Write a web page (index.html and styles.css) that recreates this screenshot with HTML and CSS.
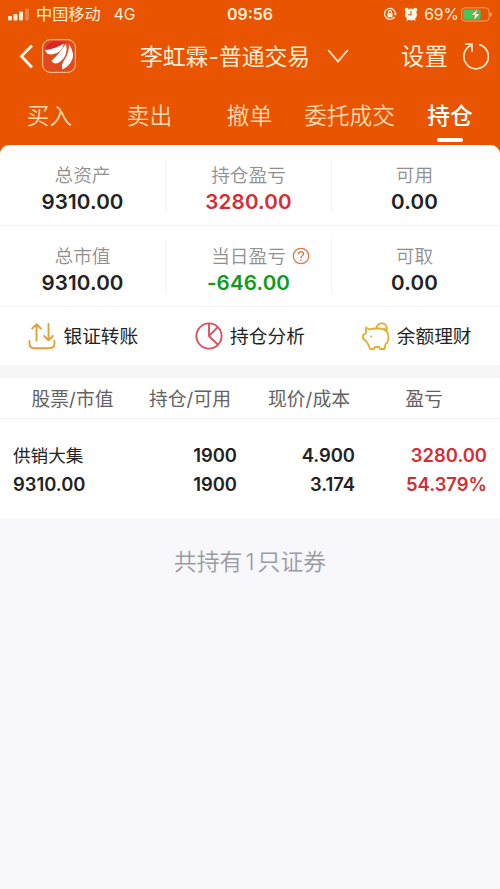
FILE: index.html
```html
<!DOCTYPE html>
<html lang="zh-CN">
<head>
<meta charset="utf-8">
<title>持仓</title>
<link rel="stylesheet" href="styles.css">
</head>
<body>
<header class="top">
  <div class="status">
    <div class="status-left">
      <svg class="signal" width="22" height="13" viewBox="0 0 22 13" fill="#fff0dc"><rect x="0" y="8" width="4" height="4.500" rx="1"/><rect x="5.500" y="6" width="4" height="6.500" rx="1"/><rect x="11" y="3.500" width="4" height="9" rx="1"/><rect x="17" y="0.500" width="4" height="12" rx="1" opacity=".3"/></svg>
      <span class="carrier">中国移动</span><span class="network">4G</span>
    </div>
    <time class="clock">09:56</time>
    <div class="status-right">
      <svg width="14" height="14" viewBox="0 0 14 14" fill="none" stroke="#fff0dc" stroke-width="1.300"><path d="M11.700 9.800A5.500 5.500 0 1 1 12.500 7"/><path d="M10.700 6.500h3.300l-1.600 2.300z" fill="#fff0dc" stroke="none"/><rect x="4.400" y="6.300" width="5.200" height="4" fill="#fff0dc" stroke="none"/><path d="M5.500 6.500V5.200a1.500 1.500 0 0 1 3 0v1.300"/></svg>
      <svg class="alarm" width="14" height="15" viewBox="0 0 14 15"><g fill="#fff5e8"><circle cx="7" cy="7.500" r="5.900"/><circle cx="2.700" cy="2.700" r="2"/><circle cx="11.300" cy="2.700" r="2"/><path d="M2 14l1.600-3 2 1.500zM12 14l-1.600-3-2 1.500z"/></g><path d="M7 4v3.700H4.200" fill="none" stroke="#e85400" stroke-width="1.100"/></svg>
      <span class="percent">69%</span>
      <svg class="battery" width="31" height="15" viewBox="0 0 31 15"><rect x=".6" y=".8" width="27.500" height="13.200" rx="3.500" fill="none" stroke="#f5a477" stroke-width="1"/><rect x="2.200" y="2.400" width="17.500" height="10" rx="2" fill="#43c75b"/><path d="M29.300 5v5q1.500-.8 1.500-2.500T29.300 5" fill="#f5a477"/><path d="M16.500 2L10.500 8h3.600l-1.500 5.300L18.700 7h-3.600z" fill="#fff" stroke="#e85400" stroke-width=".4"/></svg>
    </div>
  </div>
  <div class="nav">
    <div class="nav-left">
      <svg width="15" height="25" viewBox="0 0 15 25" fill="none" stroke="#fff5e8" stroke-width="2.800"><path d="M13 1.500L2.500 12.300 13 23.500"/></svg>
      <svg class="logo" width="34" height="34" viewBox="0 0 34 34"><rect x=".7" y=".7" width="32.600" height="32.600" rx="7.500" fill="#e04a1d" stroke="#ffd0a2" stroke-width="1"/><path d="M3 12Q4 3 13 2.500h12Q20 8 3 12z" fill="#dc2626"/><g fill="#fff"><path d="M3 11Q11 11 22 4.500 20 14 10 15.500 5 16 3 11z"/><path d="M9.500 22Q17 15 24 4.500 26.500 16 19 22 13 27 9.500 22z"/><path d="M20.500 30.500Q18.500 26 23 20 27 14 27 5 34 16 29 23 26 28 20.500 30.500z"/></g></svg>
    </div>
    <h1 class="title">李虹霖-普通交易</h1>
    <svg class="chevron" width="22" height="16" viewBox="0 0 22 16" fill="none" stroke="#ffe2bd" stroke-width="1.900"><path d="M1.200 2L11 13.500 20.800 2"/></svg>
    <span class="settings">设置</span>
    <svg class="refresh" width="27" height="28" viewBox="0 0 27 28" fill="none" stroke="#ffe9cc" stroke-width="1.700"><path d="M17.200 2.600A12.300 12.300 0 1 1 9.300 3.200"/><path d="M3 2.200h7v7.500"/></svg>
  </div>
  <nav class="tabs">
    <span>买入</span><span>卖出</span><span>撤单</span><span>委托成交</span><span class="active">持仓</span>
  </nav>
</header>
<main>
  <section class="summary">
    <div class="metrics">
      <div class="metric"><span class="label">总资产</span><b>9310.00</b></div>
      <div class="metric"><span class="label">持仓盈亏</span><b class="red">3280.00</b></div>
      <div class="metric"><span class="label">可用</span><b>0.00</b></div>
    </div>
    <div class="metrics">
      <div class="metric"><span class="label">总市值</span><b>9310.00</b></div>
      <div class="metric"><span class="label">当日盈亏<svg class="help" width="18" height="18" viewBox="0 0 18 18" fill="none" stroke="#d9794a" stroke-width="1.300"><circle cx="9" cy="9" r="7.700"/><path d="M6.500 7.200Q6.500 4.700 9 4.700t2.500 2.200Q11.500 8 10.200 8.800 9 9.500 9 10.900" stroke-width="1.300"/><circle cx="9" cy="13.100" r=".3"/></svg></span><b class="green">-646.00</b></div>
      <div class="metric"><span class="label">可取</span><b>0.00</b></div>
    </div>
    <div class="actions">
      <div class="action"><svg width="28" height="28" viewBox="0 0 28 28" fill="none" stroke="#dfa03c" stroke-width="1.900" stroke-linecap="round" stroke-linejoin="round"><path d="M8.500 18.500V2.300M4.200 6.500L8.500 2.200l4.300 4.300M20.500 2v15.800M16.200 14l4.300 4.300 4.300-4.300M1.500 19v2.500q0 4.700 5 4.700h15q5 0 5-4.700V19"/></svg><span>银证转账</span></div>
      <div class="action"><svg width="28" height="28" viewBox="0 0 28 28" fill="none" stroke="#dd5360" stroke-width="1.900" stroke-linejoin="round"><circle cx="14" cy="14" r="12.600"/><path d="M14 1.400V14l9 8.800M14 14l8.700-8.800"/></svg><span>持仓分析</span></div>
      <div class="action"><svg width="28" height="28" viewBox="0 0 28 28" fill="none" stroke="#e2ae2e" stroke-width="1.800" stroke-linejoin="round"><path d="M4 5.500l3.500 2Q10 6.500 14 6.500h4Q26.500 7.500 26.500 15q0 5-3 7.300L22.500 27H18l-1-2h-4l-1 2H8l-1.500-4Q5 20 3.800 19L1 16.300v-3L4 11z"/><path d="M14.500 6.500A5.200 5.200 0 1 1 24.500 8.500q-1-1.500-3-1.500"/><circle cx="9" cy="14.500" r="1" fill="#e2ae2e" stroke="none"/></svg><span>余额理财</span></div>
    </div>
  </section>
  <section class="holdings">
    <div class="columns"><span>股票/市值</span><span>持仓/可用</span><span>现价/成本</span><span>盈亏</span></div>
    <div class="holding">
      <div class="cell name"><span class="stock">供销大集</span><span>9310.00</span></div>
      <div class="cell"><span>1900</span><span>1900</span></div>
      <div class="cell"><span>4.900</span><span>3.174</span></div>
      <div class="cell red"><span>3280.00</span><span>54.379%</span></div>
    </div>
  </section>
  <p class="total">共持有<span class="count">1</span>只证券</p>
</main>
</body>
</html>
```

FILE: styles.css
```css
* { box-sizing: border-box; }
body { margin: 0; width: 500px; min-height: 889px; background: #f7f7fc; font-family: Inter, "Noto Sans CJK SC", sans-serif; color: #222; }
svg { display: block; flex: none; }
.top { height: 157px; background: #e85400; color: #ffedd8; }
.status { height: 28px; display: grid; grid-template-columns: 1fr auto 1fr; align-items: center; padding: 0 8px 0 8px; }
.status-left, .status-right { display: flex; align-items: center; }
.status-right { justify-content: flex-end; }
.carrier { margin-left: 6px; font-size: 16.2px; line-height: 28px; }
.network { margin-left: 13px; font-size: 15.6px; }
.clock { font-size: 16px; font-weight: 600; }
.alarm { margin-left: 7px; }
.percent { margin-left: 6px; font-size: 15.7px; }
.battery { margin-left: 2px; }
.nav { height: 56px; display: flex; align-items: center; padding: 0 11px 0 19px; }
.nav-left { display: flex; align-items: center; gap: 8px; width: 121px; }
.title { margin: 0; width: 170px; font-size: 22.8px; font-weight: 400; line-height: 56px; padding-top: 1px; white-space: nowrap; }
.chevron { margin-left: 17px; }
.settings { margin-left: 52px; width: 47px; font-size: 23.4px; line-height: 56px; padding-top: 2px; }
.refresh { margin-left: auto; }
.tabs { height: 61px; display: grid; grid-template-columns: repeat(5, 1fr); text-align: center; font-size: 22.7px; font-weight: 350; line-height: 64px; color: #ffd9b0; white-space: nowrap; }
.tabs span { display: flex; flex-direction: column; align-items: center; margin-left: -1px; }
.tabs .active { color: #fff; font-weight: 500; margin-left: 0; }
.active::after { content: ""; width: 26px; height: 4px; border-radius: 2px; background: #fff; margin-top: -10px; }
.summary { position: relative; margin-top: -12px; background: #fff; border-radius: 9px 9px 0 0; height: 220px; }
.metrics { height: 81px; display: grid; grid-template-columns: 165px 166px 1fr; align-items: center; border-bottom: 1px solid #f3f3f3; }
.metric { height: 54px; display: flex; flex-direction: column; align-items: center; border-left: 1px solid #f3f3f3; padding-top: 4px; }
.metric:first-child { border-left: 0; }
.metric:last-child { padding-right: 3px; }
.label { position: relative; font-size: 18.7px; font-weight: 350; line-height: 27px; color: #909090; }
.help { position: absolute; left: 100%; top: 4px; margin-left: 6px; }
.metric b { font-size: 20.6px; font-weight: 600; line-height: 26px; letter-spacing: .15px; }
.red, .metric b.red { color: #d92b32; }
.metric b.green { color: #109c18; }
.actions { height: 58px; display: grid; grid-template-columns: repeat(3, 1fr); }
.action { display: flex; align-items: center; justify-content: center; gap: 7px; font-size: 18.7px; line-height: 56px; }
.action span { padding-top: 2px; }
.holdings { border-top: 13px solid #f6f6f6; border-bottom: 6px solid #f7f7f8; background: #fff; height: 159px; }
.columns { height: 41px; display: grid; grid-template-columns: 145px 90px 148px 82px; border-bottom: 1px solid #f1f1f1; text-align: center; font-size: 18.8px; line-height: 43px; color: #626262; white-space: nowrap; }
.holding { display: grid; grid-template-columns: 110px 127px 118px 132px; padding-top: 22px; font-size: 18.4px; font-weight: 600; }
.cell { display: flex; flex-direction: column; align-items: flex-end; line-height: 29px; }
.name { align-items: flex-start; padding-left: 13px; }
.stock { font-size: 17.6px; font-weight: 400; }
.total { margin: 21px 0 0; text-align: center; font-size: 22.9px; font-weight: 350; line-height: 34px; color: #9a9aa2; }
.count { margin: 0 3px; }
```
